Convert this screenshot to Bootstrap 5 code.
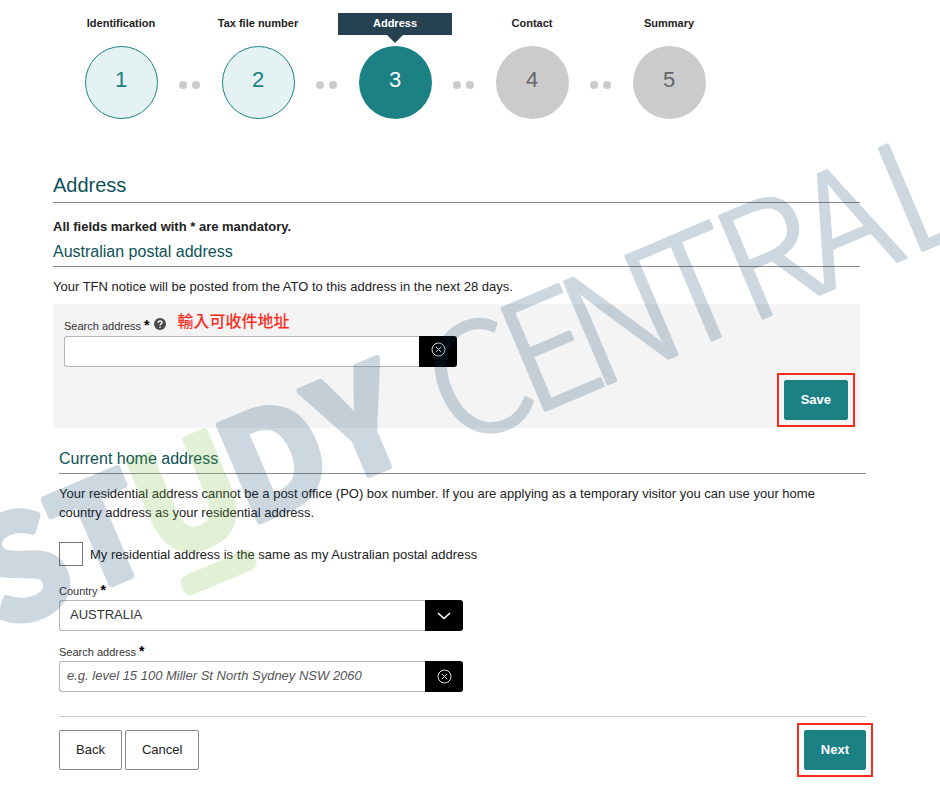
<!DOCTYPE html>
<html lang="en">
<head>
<meta charset="utf-8">
<meta name="viewport" content="width=device-width, initial-scale=1">
<title>Address</title>
<link href="https://cdn.jsdelivr.net/npm/bootstrap@5.3.0/dist/css/bootstrap.min.css" rel="stylesheet">
<style>
  :root { --teal: #1b8185; --deep: #0d5257; --navy: #264250; --alert: #fb2c1d; }
  body { font-family: "Liberation Sans", Arial, sans-serif; font-size: 13px; line-height: 19px; color: #222; background: #fff; }
  .page { overflow: hidden; min-height: 100vh; }
  .stepper { padding: 13px 0 0 64px; }
  .step { width: 114px; }
  .step-label { height: 22px; line-height: 20px; font-size: 11px; font-weight: 700; margin-bottom: 11px; color: #222; }
  .step-num { width: 73px; height: 73px; font-size: 22px; padding-bottom: 6px; background: #cbcbcb; color: #666; }
  .step.done .step-num { background: #e4f2f3; color: var(--teal); border: 1px solid var(--teal); }
  .step.current .step-num { background: var(--teal); color: #fff; }
  .step.current .step-label { background: var(--navy); color: #fff; }
  .step.current .step-label::after { content: ""; position: absolute; top: 100%; left: 50%; margin-left: -8px; border: 8px solid transparent; border-bottom: 0; border-top-color: var(--navy); }
  .dots { width: 23px; gap: 5px; padding-top: 68px; }
  .dots i { width: 8px; height: 8px; background: #cbcbcb; }
  .postal { padding: 51px 80px 0 53px; }
  .home { padding: 21px 74px 0 59px; }
  .title-main { font-size: 20px; line-height: 30px; font-weight: 400; color: var(--deep); border-bottom: 1px solid #8a8a8a; padding-bottom: 2px; margin-bottom: 14px; }
  .mandatory { margin-bottom: 6px; }
  .title-sub { font-size: 16px; line-height: 20px; font-weight: 400; color: var(--deep); border-bottom: 1px solid #8a8a8a; padding-bottom: 4px; margin-bottom: 10px; }
  .search-panel { background: #f4f4f4; padding: 9px 5px 1px 11px; margin-top: 8px; }
  .label-row { padding-bottom: 1px; }
  .panel-actions { padding-top: 6px; }
  .intro { padding-right: 16px; }
  .field-label { font-size: 11px; line-height: 18px; color: #333; }
  .field-label b { font-size: 14px; line-height: 12px; color: #000; }
  .note { font-family: "Liberation Sans", "Noto Sans CJK TC", sans-serif; font-size: 16px; line-height: 18px; font-weight: 500; color: var(--alert); }
  .field { max-width: 404px; height: 31px; }
  .panel-field { max-width: 393px; }
  .field .form-control, .field .form-select { min-width: 0; height: 31px; font-size: 13px; line-height: 19px; padding: 2px 7px 4px; border: 1px solid #b5b5b5; border-right: 0; border-radius: 3px 0 0 3px; color: #333; background-image: none; }
  .field .form-select { padding-left: 10px; }
  .field ::placeholder { font-style: italic; color: #555; }
  .field-end { width: 38px; background: #000; color: #fff; border: 0; border-radius: 0 3px 3px 0; }
  .highlight { border: 2px solid var(--alert); padding: 5px; }
  .btn-act { font-size: 13px; line-height: 20px; padding: 9px 16px; border-radius: 2px; }
  .btn-teal, .btn-teal:hover { background: var(--teal); color: #fff; font-weight: 700; border-color: var(--teal); }
  .btn-plain { border: 1px solid #8a8a8a; color: #222; background: #fff; }
  .same-check { width: 24px; height: 24px; margin: 0 7px 0 0; border: 1px solid #777; border-radius: 0 !important; }
  .actions { border-top: 1px solid #ccc; margin-top: 24px; padding-top: 6px; gap: 3px; }
  .actions .highlight { margin-right: -7px; }
  .watermark { top: 0; left: 0; pointer-events: none; opacity: .2; }
  .watermark text { text-anchor: middle; font-family: "Noto Sans CJK TC", "Liberation Sans", sans-serif; }
</style>
<script src="https://cdn.jsdelivr.net/npm/bootstrap@5.3.0/dist/js/bootstrap.bundle.min.js"></script>
</head>
<body>
<div class="page position-relative">
  <ol class="stepper list-unstyled d-flex mb-0">
    <li class="step done d-flex flex-column align-items-center"><div class="step-label w-100 text-center">Identification</div><div class="step-num rounded-circle d-flex align-items-center justify-content-center">1</div></li>
    <li class="dots d-flex justify-content-center" aria-hidden="true"><i class="rounded-circle"></i><i class="rounded-circle"></i></li>
    <li class="step done d-flex flex-column align-items-center"><div class="step-label w-100 text-center">Tax file number</div><div class="step-num rounded-circle d-flex align-items-center justify-content-center">2</div></li>
    <li class="dots d-flex justify-content-center" aria-hidden="true"><i class="rounded-circle"></i><i class="rounded-circle"></i></li>
    <li class="step current d-flex flex-column align-items-center" aria-current="step"><div class="step-label w-100 text-center position-relative">Address</div><div class="step-num rounded-circle d-flex align-items-center justify-content-center">3</div></li>
    <li class="dots d-flex justify-content-center" aria-hidden="true"><i class="rounded-circle"></i><i class="rounded-circle"></i></li>
    <li class="step d-flex flex-column align-items-center"><div class="step-label w-100 text-center">Contact</div><div class="step-num rounded-circle d-flex align-items-center justify-content-center">4</div></li>
    <li class="dots d-flex justify-content-center" aria-hidden="true"><i class="rounded-circle"></i><i class="rounded-circle"></i></li>
    <li class="step d-flex flex-column align-items-center"><div class="step-label w-100 text-center">Summary</div><div class="step-num rounded-circle d-flex align-items-center justify-content-center">5</div></li>
  </ol>

  <section class="postal">
    <h1 class="title-main">Address</h1>
    <p class="mandatory fw-bold">All fields marked with * are mandatory.</p>
    <h2 class="title-sub">Australian postal address</h2>
    <p class="mb-0">Your TFN notice will be posted from the ATO to this address in the next 28 days.</p>
    <div class="search-panel">
      <div class="label-row d-flex align-items-center">
        <label class="field-label pt-1" for="postal-search">Search address <b>*</b></label>
        <svg class="ms-1" width="12" height="12" viewBox="0 0 12 12" role="img" aria-label="Help"><circle cx="6" cy="6" r="6" fill="#4a4a4a"/><path d="M4.1 4.7C4.1 2.3 8 2.3 8 4.6 8 6 6.1 6 6.1 7.3M6.1 8.4V9.8" fill="none" stroke="#fff" stroke-width="1.5"/></svg>
        <span class="note ms-2 ps-1 pb-1" lang="zh-Hant">輸入可收件地址</span>
      </div>
      <div class="field panel-field d-flex">
        <input class="form-control flex-fill shadow-none" id="postal-search" type="text">
        <button class="field-end flex-shrink-0 d-flex align-items-center justify-content-center p-0 pb-1" type="button" aria-label="Clear postal address"><svg width="15" height="15" viewBox="0 0 15 15" fill="none" stroke="#ddd"><circle cx="7.5" cy="7.5" r="6.5"/><path d="M4.8 4.8l5.4 5.4M10.2 4.8l-5.4 5.4"/></svg></button>
      </div>
      <div class="panel-actions d-flex justify-content-end"><span class="highlight"><button class="btn btn-act btn-teal d-block" type="button">Save</button></span></div>
    </div>
  </section>

  <section class="home">
    <h2 class="title-sub">Current home address</h2>
    <p class="intro mb-0">Your residential address cannot be a post office (PO) box number. If you are applying as a temporary visitor you can use your home country address as your residential address.</p>
    <div class="d-flex align-items-center mt-3 pt-1">
      <input class="form-check-input same-check flex-shrink-0" type="checkbox" id="same"><label for="same">My residential address is the same as my Australian postal address</label>
    </div>
    <label class="field-label d-block mt-3" for="country">Country <b>*</b></label>
    <div class="field d-flex">
      <select class="form-select flex-fill shadow-none" id="country"><option>AUSTRALIA</option></select>
      <span class="field-end flex-shrink-0 d-flex align-items-center justify-content-center" aria-hidden="true"><svg width="14" height="8" viewBox="0 0 14 8" fill="none" stroke="#fff" stroke-width="1.6"><path d="M1 1l6 5.5L13 1"/></svg></span>
    </div>
    <label class="field-label d-block mt-2 pt-1" for="home-search">Search address <b>*</b></label>
    <div class="field d-flex">
      <input class="form-control flex-fill shadow-none" id="home-search" type="text" placeholder="e.g. level 15 100 Miller St North Sydney NSW 2060">
      <button class="field-end flex-shrink-0 d-flex align-items-center justify-content-center p-0" type="button" aria-label="Clear home address"><svg width="15" height="15" viewBox="0 0 15 15" fill="none" stroke="#ddd"><circle cx="7.5" cy="7.5" r="6.5"/><path d="M4.8 4.8l5.4 5.4M10.2 4.8l-5.4 5.4"/></svg></button>
    </div>
    <div class="actions d-flex align-items-center">
      <button class="btn btn-act btn-plain" type="button">Back</button>
      <button class="btn btn-act btn-plain" type="button">Cancel</button>
      <span class="highlight ms-auto"><button class="btn btn-act btn-teal d-block" type="button">Next</button></span>
    </div>
  </section>

  <svg class="watermark position-absolute" width="940" height="788" viewBox="0 0 940 788" aria-hidden="true">
    <g transform="rotate(-23)" fill="#0a3c69" stroke="#0a3c69" stroke-linejoin="round">
      <g font-size="140" font-weight="700" stroke-width="7">
        <text x="-202" y="581">S</text><text x="-115" y="581">T</text><text x="-21" y="581" fill="#73b937" stroke="#73b937">U</text><text x="73" y="581">D</text><text x="165" y="581">Y</text>
      </g>
      <g font-size="152" font-weight="300" stroke-width="3">
        <text x="292" y="591">C</text><text x="369" y="591">E</text><text x="447" y="591">N</text><text x="527" y="591">T</text><text x="608" y="591">R</text><text x="690" y="591">A</text><text x="775" y="591">L</text>
      </g>
      <rect x="-62" y="602" width="79" height="21" rx="8" fill="#73b937" stroke="none"/>
    </g>
  </svg>
</div>
</body>
</html>
